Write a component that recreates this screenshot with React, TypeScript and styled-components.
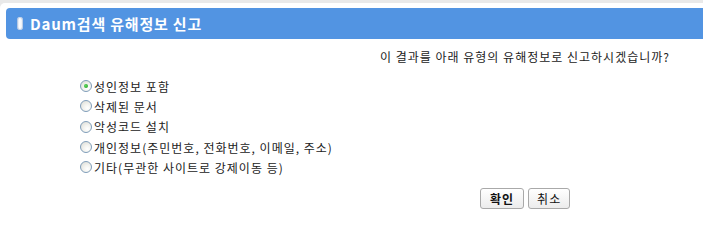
import styled, { createGlobalStyle } from 'styled-components'

const GlobalStyle = createGlobalStyle`
  html, body {
    margin: 0;
    padding: 0;
    background: #e9e9e9;
    font-family: "Noto Sans CJK KR", "Noto Sans", sans-serif;
  }
`

const Panel = styled.div`
  margin-top: 3px;
  min-height: 240px;
  background: #fff;
  border-radius: 5px 0 0 0;
  padding: 5px 0 0 6px;
  box-sizing: border-box;
`

const TitleBar = styled.div`
  height: 31px;
  background: #5294e2;
  border-radius: 4px 0 0 4px;
  display: flex;
  align-items: center;
  padding-left: 11px;
  gap: 7px;
`

const Pill = styled.span`
  width: 6px;
  height: 13px;
  border-radius: 3px;
  background: linear-gradient(90deg, #c9d6ea 0%, #ffffff 45%, #dfe7f3 100%);
  box-shadow: inset 0 0 0 1px rgba(160, 185, 220, 0.6);
`

const Title = styled.h1`
  margin: 0;
  font-size: 15px;
  font-weight: bold;
  color: #fff;
  letter-spacing: 0.8px;
`

const Question = styled.p`
  margin: 9px 33px 0 0;
  text-align: right;
  font-size: 12px;
  color: #222;
  letter-spacing: 1px;
`

const OptionList = styled.ul`
  list-style: none;
  margin: 12px 0 0 74px;
  padding: 0;
  display: flex;
  flex-direction: column;
  gap: 2px;
`

const Option = styled.li`
  display: flex;
  align-items: center;
  height: 18.3px;
  font-size: 12px;
  color: #222;
  letter-spacing: 1px;
`

const Radio = styled.input.attrs({ type: 'radio', name: 'reason' })`
  appearance: none;
  margin: 0 2px 0 0;
  width: 12px;
  height: 12px;
  border: 1px solid #7f9db9;
  border-radius: 50%;
  box-sizing: border-box;
  background: radial-gradient(circle at 65% 70%, #ffffff 0%, #f3f3ef 40%, #d9d9d2 100%);
  display: grid;
  place-items: center;

  &:checked::after {
    content: '';
    width: 4px;
    height: 4px;
    border-radius: 50%;
    background: radial-gradient(circle at 40% 40%, #5ed85e, #1f9a1f);
  }
`

const Actions = styled.div`
  display: flex;
  gap: 4px;
  margin: 12px 0 0 474px;
`

const Button = styled.button<{ $bold?: boolean }>`
  height: 21px;
  padding: 0 ${p => (p.$bold ? 9 : 8)}px;
  border: 1px solid #a9a9a9;
  border-radius: 3px;
  background: linear-gradient(#ffffff, #ececec);
  font-family: inherit;
  font-size: 12px;
  font-weight: ${p => (p.$bold ? 'bold' : 'normal')};
  color: #111;
  letter-spacing: 1px;
  line-height: 1;
`

const OPTIONS = [
  '성인정보 포함',
  '삭제된 문서',
  '악성코드 설치',
  '개인정보(주민번호, 전화번호, 이메일, 주소)',
  '기타(무관한 사이트로 강제이동 등)',
]

export default function App() {
  return (
    <>
      <GlobalStyle />
      <Panel>
        <TitleBar>
          <Pill />
          <Title>Daum검색 유해정보 신고</Title>
        </TitleBar>
        <Question>이 결과를 아래 유형의 유해정보로 신고하시겠습니까?</Question>
        <OptionList>
          {OPTIONS.map((label, i) => (
            <Option key={label}>
              <Radio defaultChecked={i === 0} />
              {label}
            </Option>
          ))}
        </OptionList>
        <Actions>
          <Button $bold>확인</Button>
          <Button>취소</Button>
        </Actions>
      </Panel>
    </>
  )
}
